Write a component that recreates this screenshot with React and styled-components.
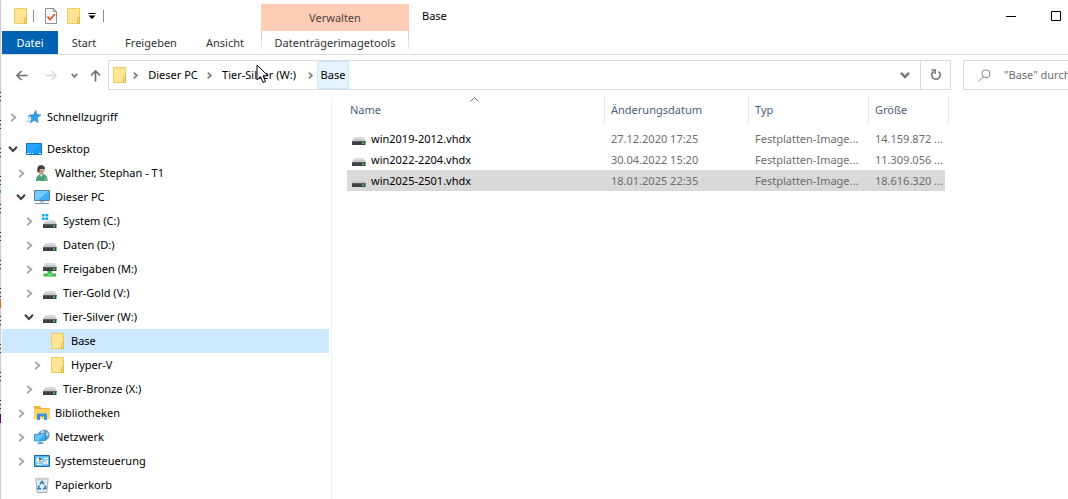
import React, { useState } from "react"
import styled, { createGlobalStyle, css } from "styled-components";

const GlobalStyle = createGlobalStyle`
    * {
        box-sizing: border-box;
    }
    body {
        margin: 0;
        background-color: #fff;
        color: #000;
        font: 11px/16px "Noto Sans", "Open Sans", sans-serif;
        overflow: hidden;
    }
    button, input {
        font: inherit;
        color: inherit;
        border: none;
        background: none;
        padding: 0;
        margin: 0;
        outline: none;
    }
    svg {
        display: block;
        flex: none;
    }
`;

const WindowStyle = styled.div`
    display: flex;
    min-height: 100vh;
`;

//Полоска окна, которое лежит под проводником
const BackdropStyle = styled.div`
    width: 2px;
    flex: none;
    border-right: 1px solid #f4f4f4;
    background:
        linear-gradient(#5b0a6b, #5b0a6b) 0 414px / 1px 9px no-repeat,
        linear-gradient(#c8761c, #c8761c) 0 299px / 1px 9px no-repeat,
        linear-gradient(#3a9ad9, #3a9ad9) 0 190px / 1px 3px no-repeat,
        linear-gradient(#d0d0d0, #d0d0d0) 0 0 / 1px 88px no-repeat,
        linear-gradient(#d0d0d0, #d0d0d0) 0 424px / 1px 100% no-repeat,
        repeating-linear-gradient(#cfcfd4 0 8px, #222 8px 9px, #e8d9b8 9px 12px, #333 12px 13px, #cfcfd4 13px 16px, #333 16px 17px, #cfcfd4 17px 28px);
`;

const ExplorerStyle = styled.div`
    flex: 1;
    min-width: 0;
    display: flex;
    flex-direction: column;
`;

const HeaderStyle = styled.header`
    display: flex;
    height: 55px;
    border-bottom: 1px solid #dadbdc;
`;

const HeaderLeft = styled.div`
    width: 259px;
    flex: none;
`;

const QuickAccess = styled.div`
    display: flex;
    align-items: center;
    height: 31px;
    padding-left: 6px;
`;

const QuickButton = styled.button`
    display: flex;
    align-items: center;
    justify-content: center;
    width: ${props => props.$width}px;
    height: 22px;
`;

const Separator = styled.div`
    width: 1px;
    height: 12px;
    background-color: #8c8c8c;
`;

const Tabs = styled.nav`
    display: flex;
    height: 23px;
`;

const Tab = styled.button`
    width: ${props => props.$width}px;
    height: 23px;
    color: #333;
    ${props => props.$file && css`
        color: #fff;
        background-color: #0063b1;
    `}
`;

const ContextGroup = styled.div`
    width: 148px;
    flex: none;
    padding-top: 4px;
    text-align: center;
`;

const ContextTitle = styled.div`
    height: 27px;
    line-height: 28px;
    background-color: #ffcdb6;
    color: #4d413c;
`;

const ContextTab = styled.button`
    width: 100%;
    height: 19px;
    padding-top: 4px;
    color: #333;
    background:
        linear-gradient(#c4c4c4, #f0f0f0) left / 1px 100% no-repeat,
        linear-gradient(#c4c4c4, #f0f0f0) right / 1px 100% no-repeat;
`;

const Title = styled.div`
    flex: 1;
    padding: 8px 13px;
`;

const WindowButton = styled.button`
    display: flex;
    align-items: center;
    height: 31px;
    width: ${props => props.$width}px;
`;

const ToolbarStyle = styled.div`
    display: flex;
    align-items: center;
    padding-top: 5px;
`;

const NavButtons = styled.div`
    width: 106px;
    flex: none;
    display: flex;
    align-items: center;
    padding-left: 4px;
`;

const NavButton = styled.button`
    display: flex;
    justify-content: center;
    align-items: center;
    width: ${props => props.$width}px;
    height: 28px;
`;

const AddressBar = styled.div`
    flex: 1;
    display: flex;
    align-items: center;
    height: 30px;
    border: 1px solid #d9d9d9;
    padding-left: 3px;
`;

const Crumb = styled.button`
    height: 28px;
    width: ${props => props.$width}px;
    border: 1px solid ${props => props.$active ? "#cce8ff" : "transparent"};
    background-color: ${props => props.$active ? "#e5f3ff" : "transparent"};
    white-space: nowrap;
`;

const CrumbArrow = styled.div`
    width: ${props => props.$width}px;
    display: flex;
    justify-content: center;
`;

const AddressButton = styled.button`
    width: 30px;
    height: 28px;
    display: flex;
    align-items: center;
    justify-content: center;
    margin-left: ${props => props.$push ? "auto" : 0};
    border-left: ${props => props.$line ? "1px solid #d9d9d9" : "none"};
`;

const SearchBox = styled.label`
    width: 105px;
    height: 30px;
    flex: none;
    margin-left: 12px;
    display: flex;
    align-items: center;
    gap: 13px;
    padding-left: 14px;
    border: 1px solid #d9d9d9;
    border-right: none;
    & input {
        flex: 1;
        min-width: 0;
    }
    & input::placeholder {
        color: #6d6d6d;
        opacity: 1;
    }
`;

const ContentStyle = styled.div`
    flex: 1;
    display: flex;
    padding-top: 7px;
`;

const Tree = styled.ul`
    width: 330px;
    flex: none;
    margin: 0;
    padding: 8px 2px 0 0;
    list-style: none;
    border-right: 1px solid #f0f0f0;
`;

const TreeItem = styled.li`
    display: flex;
    align-items: center;
    height: 24px;
    padding-left: ${props => 3 + props.$level * 8}px;
    margin-bottom: ${props => props.$gap ? 8 : 0}px;
    background-color: ${props => props.$active ? "#cde8ff" : "transparent"};
`;

const Expander = styled.button`
    display: flex;
    justify-content: center;
    align-items: center;
    width: 16px;
    height: 24px;
    margin-right: 5px;
`;

const TreeLabel = styled.button`
    display: flex;
    align-items: center;
    gap: 5px;
    height: 24px;
    white-space: nowrap;
`;

const FilesStyle = styled.main`
    flex: 1;
    min-width: 0;
    padding-left: 15px;
`;

const FileTable = styled.table`
    width: 602px;
    table-layout: fixed;
    border-collapse: separate;
    border-spacing: 0;
`;

const HeadCell = styled.th`
    position: relative;
    width: ${props => props.$width}px;
    height: 26px;
    padding: 0 0 0 ${props => props.$first ? 3 : 6}px;
    border-right: 1px solid #e5e5e5;
    color: #4c607a;
    font-weight: normal;
    text-align: left;
`;

const SortMark = styled.svg`
    position: absolute;
    top: 0;
    left: 123px;
`;

const Cell = styled.td`
    height: 21px;
    padding: 0 0 0 6px;
    color: #6d6d6d;
    white-space: nowrap;
    overflow: hidden;
    &:last-child {
        border-right: 4px solid transparent;
        background-clip: padding-box;
    }
`;

const NameCell = styled(Cell)`
    padding-left: 4px;
    color: #000;
    & > div {
        display: flex;
        align-items: center;
        gap: 4px;
    }
`;

const FileRow = styled.tr`
    & td {
        background-color: ${props => props.$active ? "#d9d9d9" : "#fff"};
    }
`;

const HeadSpace = styled.tbody`
    & td {
        height: 5px;
        padding: 0;
    }
`;

const Cursor = styled.svg`
    position: absolute;
    top: 64px;
    left: 256px;
`;

const Chevron = ({ dir = "right", color = "#a3a3a3", size = 8, stroke = 2 }) => {
    const d = dir === "right" ? "M2 .8 5.6 4 2 7.2" : "M.8 2.2 4 5.6 7.2 2.2";
    return (
        <svg width={size} height={size} viewBox="0 0 8 8" fill="none" stroke={color} strokeWidth={stroke}>
            <path d={d} />
        </svg>
    )
};

const Folder = () => (
    <svg width="16" height="16" viewBox="0 0 16 16">
        <path d="M1.5.5h12v15h-12z" fill="#ffe596" stroke="#eecb5c" />
        <path d="M11.5 15.5v-5q0-1 1-1h1v6z" fill="#ffe080" stroke="#e3b93c" />
    </svg>
);

const DriveBody = ({ y = 0 }) => (
    <g transform={`translate(0 ${y})`}>
        <path d="M3.2 6h9.6l1.6 4H1.400z" fill="#d9dbdc" />
        <path d="M2.200 8h11.600l.6 2H1.400z" fill="#c6c8ca" />
        <path d="M1 10h13.500v4H1z" fill="#3f4244" />
        <path d="M1 10h13.500v1H1z" fill="#5b5e60" />
        <path d="M11 11.500h2v1.500h-2z" fill="#3fe04a" />
    </g>
);

const Drive = () => (
    <svg width="16" height="16" viewBox="0 0 16 16"><DriveBody /></svg>
);

const NetDrive = () => (
    <svg width="16" height="16" viewBox="0 0 16 16">
        <DriveBody y={-4} />
        <path d="M5.500 10h4.500v2.500h4v3H1.500v-3h4z" fill="#3fb54a" />
        <path d="M5.500 12.500h4.500v3H5.500z" fill="#69d873" />
    </svg>
);

const SystemDrive = () => (
    <svg width="16" height="16" viewBox="0 0 16 16">
        <DriveBody y={1} />
        <path d="M0 1h7v7H0z" fill="#fff" />
        <path d="M0 1h2.700v2.600H0zM3.500 1h2.800v2.600H3.500zM0 4.400h2.700V7H0zM3.500 4.400h2.800V7H3.500z" fill="#12a9ea" />
    </svg>
);

const Star = () => (
    <svg width="16" height="16" viewBox="0 0 16 16">
        <path d="M9.800 1.500l.8 4 4.400.4-3.700 2.700.6 5-3.500-2.400-4.200 2.600 1.600-4.700L3.200 6l4.300-.3z" fill="#2d9fe8" stroke="#1976c5" strokeWidth=".6" />
        <path d="M1.500 7.200h2.700M2 9.300h2.500M.5 12.200h3" stroke="#53b5ee" strokeWidth="1" />
    </svg>
);

const DesktopIcon = () => (
    <svg width="16" height="16" viewBox="0 0 16 16">
        <path d="M.5 2.500h15v11H.5z" fill="#1b9af5" stroke="#0b72c4" />
        <path d="M1 3h13L5 12H1z" fill="#2aa5fb" />
        <path d="M1 12.500h2M4 12.500h1M6 12.500h1M13 12.500h2" stroke="#fff" />
    </svg>
);

const Person = () => (
    <svg width="16" height="16" viewBox="0 0 16 16">
        <path d="M2 16c0-4 1.500-6 4.200-6.400L9.500 9c2.500.8 4 2.600 4 7z" fill="#4d9c7c" />
        <path d="M5.500 9.300L7.500 12 9 9z" fill="#f2f2f2" />
        <path d="M4 4.600C4.200 8 5 9.800 7 9.800S10.200 8 10.200 4.600z" fill="#c99a78" />
        <path d="M3.500 7C2.600 2 4.300.2 7.200.2s4.300 1.800 3.300 5.200L9.500 4 6 4.200 4.800 7.500z" fill="#4a3d36" />
        <path d="M10.500 12.500l3 1V16h-3z" fill="#6fb595" />
    </svg>
);

const Computer = () => (
    <svg width="16" height="16" viewBox="0 0 16 16">
        <path d="M.5 1.500h15v10H.5z" fill="#3fb2f8" stroke="#55809c" />
        <path d="M1 2h13.500L4 11H1z" fill="#74cdff" />
        <path d="M6 12h4v1.500H6z" fill="#a9bac4" />
        <path d="M1 14.500h14" stroke="#6f97ad" />
    </svg>
);

const Libraries = () => (
    <svg width="16" height="16" viewBox="0 0 16 16">
        <path d="M0 1h6l1.500 2H16v11H0z" fill="#f0b73b" />
        <path d="M0 4h16v10H0z" fill="#ffd466" />
        <path d="M3 15V9.500q0-1 1-1h8q1 0 1 1V15h-3v-3.500H6V15z" fill="#3a94dc" />
    </svg>
);

const Network = () => (
    <svg width="16" height="16" viewBox="0 0 16 16">
        <circle cx="10" cy="6" r="5.600" fill="#5f93b8" />
        <path d="M7 2q2-2 3 .5T8.500 5.500Q6 4.500 7 2zM12 3q2.500 0 2.500 3.500Q12 8 11.500 5z" fill="#b9d6e5" />
        <path d="M.5 5.500l11-1v7l-11 .5z" fill="#38a8f1" stroke="#2683c4" strokeWidth=".8" />
        <path d="M1 6l10-1-7 6.500H1z" fill="#6bc4fb" />
        <path d="M5 12.500h3l2 2.500H3z" fill="#75a5c4" />
    </svg>
);

const ControlPanel = () => (
    <svg width="16" height="16" viewBox="0 0 16 16">
        <path d="M.5 2.500h15v11H.5z" fill="#3babea" stroke="#176ca8" />
        <path d="M1.500 3.500h13v9h-13z" fill="#7dcdf6" />
        <circle cx="5" cy="7" r="2.700" fill="#fff" />
        <path d="M5 7V4.300A2.700 2.700 0 0 1 7.700 7z" fill="#1f77b9" />
        <path d="M4 8.500a2.500 2.500 0 0 0 3.500 0L5.500 7z" fill="#f1932c" />
        <path d="M10 5.500h4M3 11.500h4" stroke="#fff" />
        <path d="M9.500 8h2v3h-2zM12.500 7h1.500v4h-1.500z" fill="#fff" />
        <path d="M10 8.500h1v1h-1z" fill="#f1932c" />
    </svg>
);

const RecycleBin = () => (
    <svg width="16" height="16" viewBox="0 0 16 16">
        <path d="M1.800 1.800h12.400l-1.400 13.700H3.200z" fill="#e6e9ea" stroke="#a6abad" />
        <path d="M1.500.8h13v1.600h-13z" fill="#c9cdcf" />
        <path d="M6 7.200L8 4.500l2 2.700M10.800 8.500l1 2.700-2.800.6M7 11.800l-2.800-.3L5.200 8.500" fill="none" stroke="#2382cd" strokeWidth="1.700" />
    </svg>
);

const CheckedPage = () => (
    <svg width="14" height="16" viewBox="0 0 14 16">
        <path d="M1.500.5h8l3 3v12h-11z" fill="#f8f8f8" stroke="#8e8e8e" />
        <path d="M9.500.5v3h3" fill="none" stroke="#8e8e8e" />
        <path d="M3.500 8.500l2.500 3 5-5.500" fill="none" stroke="#e8501e" strokeWidth="1.800" />
    </svg>
);

const Arrow = ({ dir, color }) => {
    const paths = {
        left: "M12.500 6.500H1.500M6.500 2l-4.500 4.500 4.500 4.500",
        right: "M.5 6.500h11M6.500 2l4.500 4.500-4.500 4.500",
        up: "M6.500 12.500V1.500M2 6.500l4.500-4.500 4.500 4.500",
    };
    return (
        <svg width="13" height="13" viewBox="0 0 13 13" fill="none" stroke={color} strokeWidth="1.600">
            <path d={paths[dir]} />
        </svg>
    )
};

const treeItems = [
    { title: "Schnellzugriff", level: 0, icon: Star, state: "closed", gap: true },
    { title: "Desktop", level: 0, icon: DesktopIcon, state: "open" },
    { title: "Walther, Stephan - T1", level: 1, icon: Person, state: "closed" },
    { title: "Dieser PC", level: 1, icon: Computer, state: "open" },
    { title: "System (C:)", level: 2, icon: SystemDrive, state: "closed" },
    { title: "Daten (D:)", level: 2, icon: Drive, state: "closed" },
    { title: "Freigaben (M:)", level: 2, icon: NetDrive, state: "closed" },
    { title: "Tier-Gold (V:)", level: 2, icon: Drive, state: "closed" },
    { title: "Tier-Silver (W:)", level: 2, icon: Drive, state: "open" },
    { title: "Base", level: 3, icon: Folder },
    { title: "Hyper-V", level: 3, icon: Folder, state: "closed" },
    { title: "Tier-Bronze (X:)", level: 2, icon: Drive, state: "closed" },
    { title: "Bibliotheken", level: 1, icon: Libraries, state: "closed" },
    { title: "Netzwerk", level: 1, icon: Network, state: "closed" },
    { title: "Systemsteuerung", level: 1, icon: ControlPanel, state: "closed" },
    { title: "Papierkorb", level: 1, icon: RecycleBin },
];

const files = [
    { name: "win2019-2012.vhdx", date: "27.12.2020 17:25", size: "14.159.872 ..." },
    { name: "win2022-2204.vhdx", date: "30.04.2022 15:20", size: "11.309.056 ..." },
    { name: "win2025-2501.vhdx", date: "18.01.2025 22:35", size: "18.616.320 ..." },
];

const Header = () => (
    <HeaderStyle>
        <HeaderLeft>
            <QuickAccess>
                <QuickButton $width={25} aria-label="Fenster"><Folder /></QuickButton>
                <Separator />
                <QuickButton $width={34} aria-label="Eigenschaften"><CheckedPage /></QuickButton>
                <QuickButton $width={12} aria-label="Neuer Ordner"><Folder /></QuickButton>
                <QuickButton $width={23} aria-label="Anpassen">
                    <svg width="8" height="6" viewBox="0 0 8 6">
                        <path d="M.5 0h7v1h-7zM.5 2.500h7L4 6z" />
                    </svg>
                </QuickButton>
                <Separator />
            </QuickAccess>
            <Tabs>
                <Tab $width={56} $file>Datei</Tab>
                <Tab $width={52}>Start</Tab>
                <Tab $width={82}>Freigeben</Tab>
                <Tab $width={66}>Ansicht</Tab>
            </Tabs>
        </HeaderLeft>
        <ContextGroup>
            <ContextTitle>Verwalten</ContextTitle>
            <ContextTab>Datenträgerimagetools</ContextTab>
        </ContextGroup>
        <Title>Base</Title>
        <WindowButton $width={45} aria-label="Minimieren">
            <svg width="10" height="10"><path d="M0 5h10v1H0z" /></svg>
        </WindowButton>
        <WindowButton $width={17} aria-label="Maximieren">
            <svg width="10" height="10"><path d="M.5.5h9v9h-9z" fill="none" stroke="#000" /></svg>
        </WindowButton>
    </HeaderStyle>
);

const Toolbar = () => {
    const [query, setQuery] = useState("");
    return (
        <ToolbarStyle>
            <NavButtons>
                <NavButton $width={30} aria-label="Zurück"><Arrow dir="left" color="#6e6e6e" /></NavButton>
                <NavButton $width={30} aria-label="Vorwärts"><Arrow dir="right" color="#d9d9d9" /></NavButton>
                <NavButton $width={16} aria-label="Verlauf"><Chevron dir="down" color="#808080" size={7} /></NavButton>
                <NavButton $width={26} aria-label="Nach oben"><Arrow dir="up" color="#6e6e6e" /></NavButton>
            </NavButtons>
            <AddressBar>
                <Folder />
                <CrumbArrow $width={15}><Chevron color="#808080" size={7} /></CrumbArrow>
                <Crumb $width={60}>Dieser PC</Crumb>
                <CrumbArrow $width={12}><Chevron color="#808080" size={7} /></CrumbArrow>
                <Crumb $width={88}>Tier-Silver (W:)</Crumb>
                <CrumbArrow $width={14}><Chevron color="#808080" size={7} /></CrumbArrow>
                <Crumb $width={32} $active>Base</Crumb>
                <AddressButton $push aria-label="Vorherige Orte">
                    <Chevron dir="down" color="#757575" size={10} />
                </AddressButton>
                <AddressButton $line aria-label="Aktualisieren">
                    <svg width="12" height="12" viewBox="0 0 12 12" fill="none" stroke="#757575" strokeWidth="1.600">
                        <path d="M8.500 2.700a4.200 4.200 0 1 1-4.800-.2" />
                        <path d="M1.500 1h3.700v4" strokeWidth="1.500" />
                    </svg>
                </AddressButton>
            </AddressBar>
            <SearchBox>
                <svg width="13" height="13" viewBox="0 0 13 13" fill="none" stroke="#8a8590">
                    <circle cx="8" cy="4.800" r="4" />
                    <path d="M5.200 7.700L.5 12.500" />
                </svg>
                <input
                    type="text"
                    aria-label="Suchen"
                    placeholder={'"Base" durch'}
                    value={query}
                    onChange={e => setQuery(e.target.value)}
                />
            </SearchBox>
        </ToolbarStyle>
    )
};

const FolderTree = () => {
    const [active, setActive] = useState("Base");
    return (
        <Tree>
            {treeItems.map(({ title, level, icon: Icon, state, gap }) => (
                <TreeItem key={title} $level={level} $gap={gap} $active={title === active}>
                    {/* у элементов без вложений стрелки нет, но место остаётся */}
                    <Expander aria-label={"Erweitern " + title}>
                        {state === "closed" && <Chevron size={9} stroke={1.6} />}
                        {state === "open" && <Chevron dir="down" color="#404040" size={10} stroke={1.6} />}
                    </Expander>
                    <TreeLabel onClick={() => setActive(title)}>
                        <Icon />
                        {title}
                    </TreeLabel>
                </TreeItem>
            ))}
        </Tree>
    )
};

const FileList = () => {
    const [active, setActive] = useState("win2025-2501.vhdx");
    return (
        <FilesStyle>
            <FileTable>
                <thead>
                    <tr>
                        <HeadCell $width={258} $first>
                            Name
                            <SortMark width="9" height="5" viewBox="0 0 9 5" fill="none" stroke="#707070">
                                <path d="M.5 4.500l4-4 4 4" />
                            </SortMark>
                        </HeadCell>
                        <HeadCell $width={144}>Änderungsdatum</HeadCell>
                        <HeadCell $width={120}>Typ</HeadCell>
                        <HeadCell $width={80}>Größe</HeadCell>
                    </tr>
                </thead>
                <HeadSpace>
                    <tr><td colSpan="4"></td></tr>
                </HeadSpace>
                <tbody>
                    {files.map(file => (
                        <FileRow key={file.name} $active={file.name === active} onClick={() => setActive(file.name)}>
                            <NameCell><div><Drive />{file.name}</div></NameCell>
                            <Cell>{file.date}</Cell>
                            <Cell>Festplatten-Image...</Cell>
                            <Cell>{file.size}</Cell>
                        </FileRow>
                    ))}
                </tbody>
            </FileTable>
        </FilesStyle>
    )
};

const App = () => (
    <WindowStyle>
        <GlobalStyle />
        <BackdropStyle />
        <ExplorerStyle>
            <Header />
            <Toolbar />
            <ContentStyle>
                <FolderTree />
                <FileList />
            </ContentStyle>
        </ExplorerStyle>
        <Cursor width="13" height="20" viewBox="0 0 13 20">
            <path d="M1 1v15l3.500-3.300L7 18.500l2.500-1-2.400-5.700H12z" fill="#fff" stroke="#000" />
        </Cursor>
    </WindowStyle>
);

export default App;
